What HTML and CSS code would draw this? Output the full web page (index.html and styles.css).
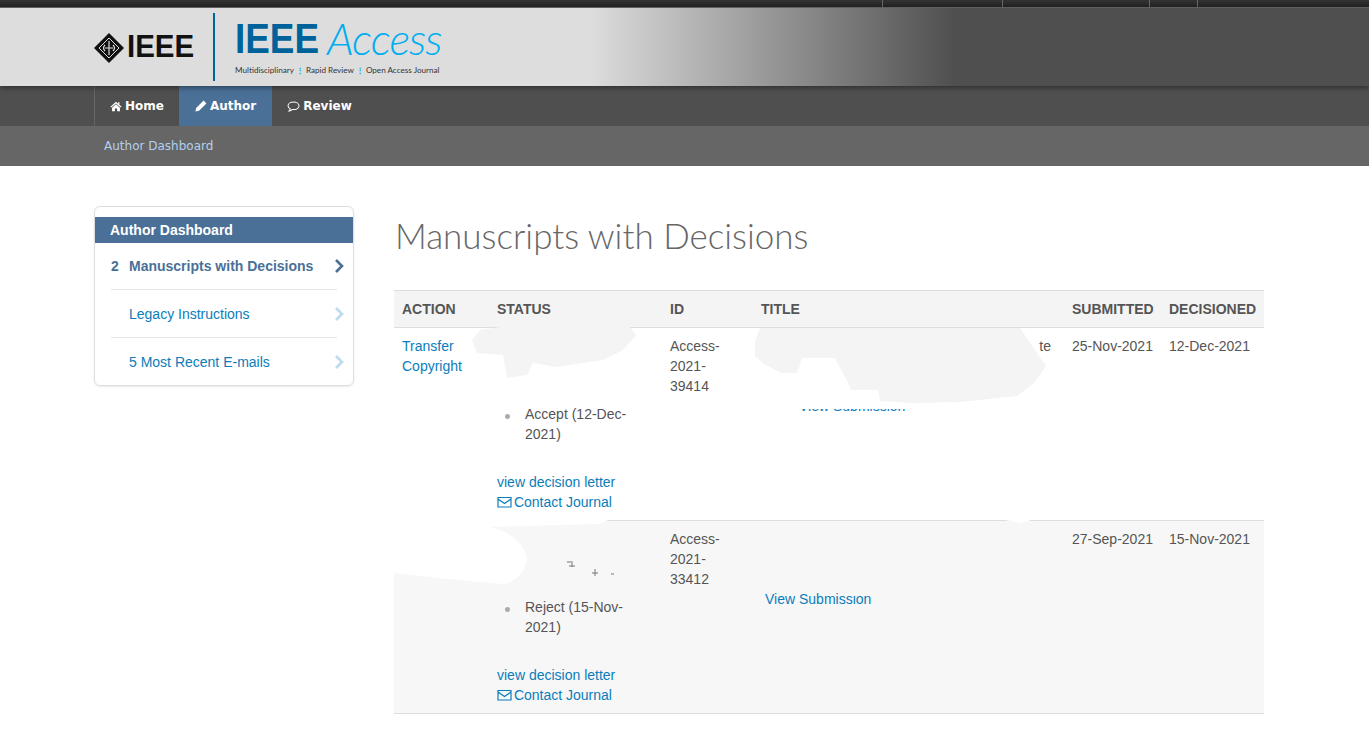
FILE: index.html
```html
<!DOCTYPE html>
<html lang="en">
<head>
    <meta charset="UTF-8">
    <title>Manuscripts with Decisions</title>
    <link rel="stylesheet" href="styles.css">
</head>
<body>
    <div class="topbar">
        <span class="top-item w120"></span>
        <span class="top-item w147"></span>
        <span class="top-item w48"></span>
        <span class="top-item w172"></span>
    </div>
    <header class="banner">
        <div class="ieee-logo">
            <svg class="ieee-mark" viewBox="0 0 30 30" width="30" height="30">
                <path d="M15 0 L30 15 L15 30 L0 15 Z" fill="#111"/>
                <path d="M15 5 L25 15 L15 25 L5 15 Z" fill="none" stroke="#ddd" stroke-width="1"/>
                <path d="M15 8 V22 M11 12 Q8 15 11 18 M19 12 Q22 15 19 18 M11 15 H19" fill="none" stroke="#ddd" stroke-width="1.2"/>
            </svg>
            <span class="ieee-word">IEEE</span>
        </div>
        <div class="logo-rule"></div>
        <div class="access-logo">
            <div class="access-name"><span class="access-ieee">IEEE</span><span class="access-word">Access</span></div>
            <div class="access-tag">Multidisciplinary <b>⋮</b> Rapid Review <b>⋮</b> Open Access Journal</div>
        </div>
    </header>
    <nav class="mainnav">
        <a class="nav-item" href="#">
            <svg viewBox="0 0 14 12" width="12" height="11"><path d="M7 0.5 L0.5 6.2 L1.4 7.2 L7 2.4 L12.6 7.2 L13.5 6.2 L11 4 V1 H9.5 V2.7 Z M2.4 7.4 V11.5 H5.7 V8.2 H8.3 V11.5 H11.6 V7.4 L7 3.5 Z" fill="#fff"/></svg>
            Home
        </a>
        <a class="nav-item active" href="#">
            <svg viewBox="0 0 12 12" width="12" height="12"><path d="M8.6 0.6 L11.4 3.4 L4 10.8 L0.4 11.6 L1.2 8 Z" fill="#fff"/></svg>
            Author
        </a>
        <a class="nav-item" href="#">
            <svg viewBox="0 0 14 12" width="13" height="11"><path d="M7 1 C3.6 1 1 2.9 1 5.2 C1 6.6 2 7.8 3.5 8.6 C3.3 9.4 2.8 10.2 2.2 10.8 C3.6 10.6 4.8 10 5.6 9.3 C6 9.4 6.5 9.4 7 9.4 C10.4 9.4 13 7.5 13 5.2 C13 2.9 10.4 1 7 1 Z" fill="none" stroke="#fff" stroke-width="1.1"/></svg>
            Review
        </a>
    </nav>
    <div class="subnav">
        <a href="#">Author Dashboard</a>
    </div>

    <main class="content">
        <aside class="side-card">
            <h4 class="side-title">Author Dashboard</h4>
            <a class="side-row current" href="#">
                <span class="side-num">2</span>
                <span class="side-label">Manuscripts with Decisions</span>
                <svg class="chev" viewBox="0 0 10 14" width="10" height="14"><path d="M2 1 L8 7 L2 13" fill="none" stroke="currentColor" stroke-width="2.6"/></svg>
            </a>
            <a class="side-row" href="#">
                <span class="side-num"></span>
                <span class="side-label">Legacy Instructions</span>
                <svg class="chev" viewBox="0 0 10 14" width="10" height="14"><path d="M2 1 L8 7 L2 13" fill="none" stroke="currentColor" stroke-width="2.6"/></svg>
            </a>
            <a class="side-row" href="#">
                <span class="side-num"></span>
                <span class="side-label">5 Most Recent E-mails</span>
                <svg class="chev" viewBox="0 0 10 14" width="10" height="14"><path d="M2 1 L8 7 L2 13" fill="none" stroke="currentColor" stroke-width="2.6"/></svg>
            </a>
        </aside>

        <section class="manuscripts">
            <h1>Manuscripts with Decisions</h1>
            <table class="decisions">
                <colgroup>
                    <col class="c-action">
                    <col class="c-status">
                    <col class="c-id">
                    <col class="c-title">
                    <col class="c-date">
                    <col class="c-date2">
                </colgroup>
                <thead>
                    <tr>
                        <th>ACTION</th>
                        <th>STATUS</th>
                        <th>ID</th>
                        <th>TITLE</th>
                        <th>SUBMITTED</th>
                        <th>DECISIONED</th>
                    </tr>
                </thead>
                <tbody>
                    <tr>
                        <td><a href="#">Transfer Copyright</a></td>
                        <td>
                            <div class="status-note"></div>
                            <ul class="status-list"><li><span>Accept (12-Dec-2021)</span></li></ul>
                            <a href="#">view decision letter</a><br>
                            <a href="#"><svg class="mail" viewBox="0 0 15 12" width="15" height="12"><path d="M1 1.5 H14 V11 H1 Z M1 3 L7.5 7.5 L14 3" fill="none" stroke="currentColor" stroke-width="1.2"/></svg> Contact Journal</a>
                        </td>
                        <td class="id-cell">Access-2021-39414</td>
                        <td>
                            <div class="title-text">te</div>
                            <a class="view-link shifted" href="#">View Submission</a>
                        </td>
                        <td class="nowrap">25-Nov-2021</td>
                        <td class="nowrap">12-Dec-2021</td>
                    </tr>
                    <tr class="alt">
                        <td></td>
                        <td>
                            <div class="status-note"></div>
                            <ul class="status-list"><li><span>Reject (15-Nov-2021)</span></li></ul>
                            <a href="#">view decision letter</a><br>
                            <a href="#"><svg class="mail" viewBox="0 0 15 12" width="15" height="12"><path d="M1 1.5 H14 V11 H1 Z M1 3 L7.5 7.5 L14 3" fill="none" stroke="currentColor" stroke-width="1.2"/></svg> Contact Journal</a>
                        </td>
                        <td class="id-cell">Access-2021-33412</td>
                        <td>
                            <div class="title-text"></div>
                            <a class="view-link" href="#">View Submission</a>
                        </td>
                        <td class="nowrap">27-Sep-2021</td>
                        <td class="nowrap">15-Nov-2021</td>
                    </tr>
                </tbody>
            </table>
        </section>
    </main>

    <!-- painted-over patches that sit on top of the table -->
    <svg class="patches" viewBox="0 0 1369 745" width="1369" height="745">
        <path fill="#f4f4f4" d="M472 340 L480 330 L500 327 L630 327 L636 335 L623 350 L603 360 L557 367 L533 363 L527 375 L507 378 L503 355 L477 353 Z"/>
        <path fill="#fff" d="M756 356 L764 364 L781 373 L797 373 L802 358 L835 358 L848 383 L851 390 L878 390 L906 400 L906 409 L768 409 L762 385 Z"/>
        <path fill="#f4f4f4" d="M755 341 L760 328 L1020 328 L1046 366 L1034 383 L1017 396 L960 402 L912 403 L880 401 L878 390 L851 390 L848 383 L835 358 L802 358 L797 373 L781 373 L764 364 L755 356 Z"/>
        <path fill="#fff" d="M394 520 L610 519 L600 524 L490 527 Q522 535 527 558 Q524 580 503 584 L457 580 L394 573 Z"/>
        <path fill="#fff" d="M1000 519 L1035 519 L1020 523 Z"/>
        <rect fill="#f7f7f7" x="838" y="590" width="34" height="5"/>
        <path fill="none" stroke="#777" stroke-width="1" d="M567 562 H571 M572 561 V567 M569 566 H575 M595 569 V576 M592 573 H598 M611 574 H614"/>
    </svg>
</body>
</html>
```

FILE: styles.css
```css
body {
    margin: 0;
    font-family: "Liberation Sans", Arial, sans-serif;
    font-size: 14px;
    line-height: 20px;
    color: #555;
    background: #fff;
    overflow: hidden;
}
a {
    color: #0b7dbb;
    text-decoration: none;
}

/* top strip */
.topbar {
    height: 7px;
    display: flex;
    justify-content: flex-end;
    background: linear-gradient(#333, #222);
    border-bottom: 1px solid #666;
}
.top-item {
    border-left: 1px solid #666;
}
.w120 { width: 119px; }
.w147 { width: 146px; }
.w48 { width: 47px; }
.w172 { width: 171px; }

/* banner */
.banner {
    height: 78px;
    display: flex;
    align-items: center;
    padding-left: 94px;
    position: relative;
    z-index: 1;
    background: linear-gradient(90deg, #ddd 590px, #4f4f4f 955px);
    box-shadow: 0 2px 5px rgba(0,0,0,0.4);
}
.ieee-logo {
    display: flex;
    align-items: center;
    width: 119px;
}
.ieee-mark {
    flex: none;
    margin-top: 1px;
    margin-right: 3px;
}
.ieee-word {
    font-weight: bold;
    font-size: 31px;
    line-height: 30px;
    color: #111;
    transform: scaleX(0.95);
    transform-origin: left center;
}
.logo-rule {
    width: 2px;
    height: 68px;
    background: #00629b;
}
.access-logo {
    margin-left: 20px;
}
.access-name {
    display: flex;
    height: 40px;
    align-items: center;
}
.access-ieee {
    font-weight: bold;
    font-size: 43px;
    line-height: 40px;
    color: #00629b;
    width: 92px;
    transform: scaleX(0.857);
    transform-origin: left center;
}
.access-word {
    font-family: "Lato", sans-serif;
    font-weight: 300;
    font-style: italic;
    font-size: 44px;
    line-height: 40px;
    letter-spacing: -1px;
    color: #00aeef;
}
.access-tag {
    margin-top: 6px;
    font-family: "Lato", sans-serif;
    font-size: 8.15px;
    line-height: 12px;
    color: #333;
    white-space: nowrap;
}
.access-tag b {
    color: #00aeef;
}

/* nav */
.mainnav {
    height: 40px;
    display: flex;
    padding-left: 94px;
    background: #4f4f4f;
}
.nav-item {
    display: flex;
    align-items: center;
    gap: 3px;
    padding: 0 15px;
    font-family: "DejaVu Sans", Verdana, sans-serif;
    font-weight: bold;
    font-size: 12px;
    color: #fff;
}
.nav-item:first-child {
    border-left: 1px solid #666;
}
.nav-item.active {
    padding: 0 16px;
    background: #4a7098;
}
.subnav {
    height: 40px;
    display: flex;
    align-items: center;
    padding-left: 104px;
    background: #666;
    font-family: "DejaVu Sans", Verdana, sans-serif;
    font-size: 12px;
}
.subnav a {
    color: #b3d0ee;
}

/* page */
.content {
    display: flex;
    gap: 40px;
    margin-left: 94px;
    width: 1170px;
    padding-top: 40px;
}
.side-card {
    width: 258px;
    height: 168px;
    padding-top: 10px;
    border: 1px solid #ddd;
    border-radius: 6px;
    box-shadow: 0 1px 2px rgba(0,0,0,0.08);
}
.side-title {
    margin: 0;
    height: 26px;
    padding-left: 15px;
    font-size: 14px;
    line-height: 26px;
    font-weight: bold;
    color: #fff;
    background: #4a7098;
}
.side-row {
    display: flex;
    align-items: center;
    height: 47px;
    margin: 0 16px;
    border-bottom: 1px solid #e4e4e4;
    position: relative;
}
.side-row.current {
    height: 46px;
}
.side-row:last-child {
    border-bottom: 0;
}
.side-num {
    width: 18px;
    font-weight: bold;
    color: #4a7098;
}
.current .side-label {
    font-weight: bold;
    color: #4a7098;
}
.chev {
    position: absolute;
    right: -7px;
    color: #bcdcee;
}
.current .chev {
    color: #4a7098;
}

.manuscripts {
    width: 870px;
}
.manuscripts h1 {
    margin: 0 0 33px 1px;
    height: 44px;
    padding-top: 7px;
    font-family: "Lato", sans-serif;
    font-weight: 300;
    font-size: 35px;
    line-height: 44px;
    color: #666;
}
.decisions {
    width: 870px;
    table-layout: fixed;
    border-collapse: separate;
    border-spacing: 0;
    border-top: 1px solid #ddd;
}
.c-action { width: 95px; }
.c-status { width: 173px; }
.c-id { width: 91px; }
.c-title { width: 311px; }
.c-date { width: 97px; }
.c-date2 { width: 103px; }
.decisions th {
    padding: 8px;
    text-align: left;
    background: #f4f4f4;
    border-bottom: 1px solid #ddd;
    white-space: nowrap;
}
.decisions td {
    padding: 8px;
    vertical-align: top;
    border-bottom: 1px solid #ddd;
}
.decisions td.id-cell {
    padding-right: 14px;
}
.alt td {
    background: #f7f7f7;
}
.nowrap {
    white-space: nowrap;
}
.status-note {
    height: 68px;
}
.status-list {
    margin: 0 0 28px;
    padding: 0 0 0 8px;
    list-style: none;
}
.status-list li {
    display: flex;
    gap: 15px;
}
.status-list li::before {
    content: "";
    flex: none;
    width: 5px;
    height: 5px;
    margin-top: 10px;
    border-radius: 50%;
    background: #aaa;
}
.mail {
    vertical-align: -1px;
    margin-right: -2px;
}
.title-text {
    height: 60px;
    padding-right: 5px;
    text-align: right;
}
.view-link {
    margin-left: 4px;
}
.view-link.shifted {
    margin-left: 38px;
}
.patches {
    position: absolute;
    left: 0;
    top: 0;
    pointer-events: none;
}
```
